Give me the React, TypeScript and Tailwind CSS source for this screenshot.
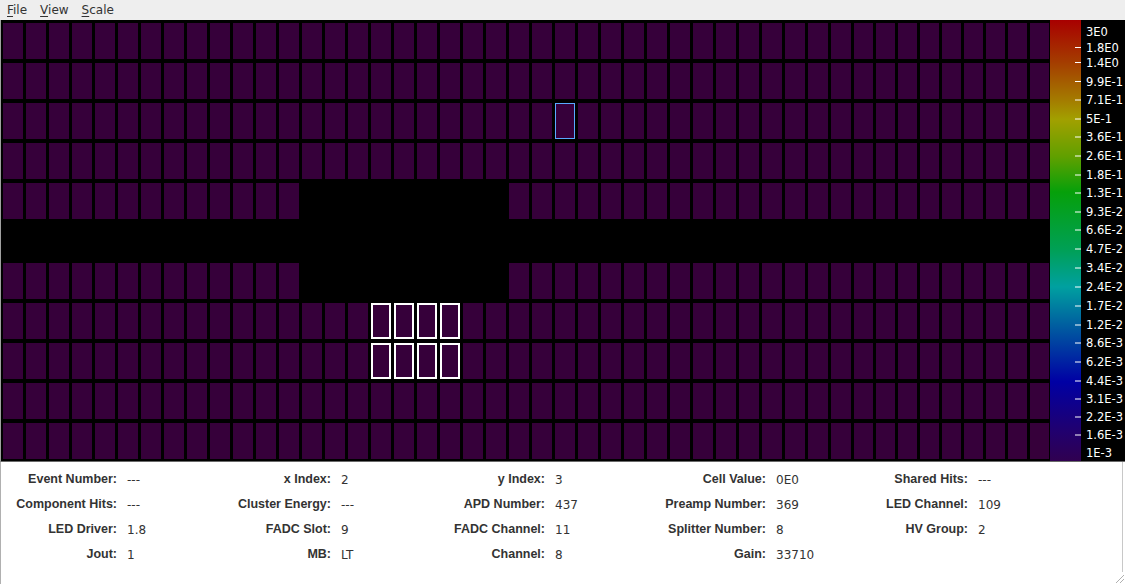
import React from "react";

const COLS = 46;
const ROWS = 11;

const labels: [string, number][] = [
  ["3E0", 32],
  ["1.8E0", 47.5],
  ["1.4E0", 62.5],
  ["9.9E-1", 81.5],
  ["7.1E-1", 100],
  ["5E-1", 119],
  ["3.6E-1", 137],
  ["2.6E-1", 156],
  ["1.8E-1", 175],
  ["1.3E-1", 193],
  ["9.3E-2", 212],
  ["6.6E-2", 230],
  ["4.7E-2", 249],
  ["3.4E-2", 268],
  ["2.4E-2", 287],
  ["1.7E-2", 306],
  ["1.2E-2", 325],
  ["8.6E-3", 343],
  ["6.2E-3", 362],
  ["4.4E-3", 381],
  ["3.1E-3", 399],
  ["2.2E-3", 417],
  ["1.6E-3", 435],
  ["1E-3", 453],
];

function Cell({ r, c }: { r: number; c: number }) {
  const w = c < 37 ? "w-[20px]" : "w-[19px]";
  const hole = r === 5 || ((r === 4 || r === 6) && c >= 13 && c <= 21);
  if (hole) return <div className={`${w} h-[36px] shrink-0 bg-black`} />;
  const blue = r === 2 && c === 24;
  const white = (r === 7 || r === 8) && c >= 16 && c <= 19;
  let cls = "bg-[#36003a]";
  if (blue) cls = "bg-[#36003a] border border-[#5aa8ff]";
  if (white) cls = "bg-[#36003a] border-2 border-white";
  return <div className={`${w} h-[36px] shrink-0 box-border ${cls}`} />;
}

function ColorBar() {
  return (
    <svg width="75" height="441" className="block shrink-0">
      <defs>
        <linearGradient id="cb" x1="0" y1="0" x2="0" y2="1">
          <stop offset="0" stopColor="#a80000" />
          <stop offset="0.095" stopColor="#a43c00" />
          <stop offset="0.18" stopColor="#a47a00" />
          <stop offset="0.225" stopColor="#a2a000" />
          <stop offset="0.31" stopColor="#60a000" />
          <stop offset="0.39" stopColor="#06a00a" />
          <stop offset="0.52" stopColor="#00a055" />
          <stop offset="0.605" stopColor="#00a0a0" />
          <stop offset="0.69" stopColor="#0060a0" />
          <stop offset="0.82" stopColor="#0000a4" />
          <stop offset="0.93" stopColor="#200070" />
          <stop offset="1" stopColor="#300050" />
        </linearGradient>
      </defs>
      <rect x="0" y="0" width="75" height="441" fill="#000" />
      <rect x="0" y="0" width="31" height="441" fill="url(#cb)" />
      {labels.map(([t, y], i) => (
        <g key={t + i}>
          {i > 0 && i < labels.length - 1 && (
            <line x1="25" x2="31" y1={y - 20} y2={y - 20} stroke="#fff" strokeWidth="1" />
          )}
          <text
            x="36"
            y={y - 20 + 4}
            fill="#fff"
            fontSize="11.5"
            fontFamily="'DejaVu Sans', sans-serif"
          >
            {t}
          </text>
        </g>
      ))}
    </svg>
  );
}

const rows: [string, string][][] = [
  [
    ["Event Number:", "---"],
    ["x Index:", "2"],
    ["y Index:", "3"],
    ["Cell Value:", "0E0"],
    ["Shared Hits:", "---"],
  ],
  [
    ["Component Hits:", "---"],
    ["Cluster Energy:", "---"],
    ["APD Number:", "437"],
    ["Preamp Number:", "369"],
    ["LED Channel:", "109"],
  ],
  [
    ["LED Driver:", "1.8"],
    ["FADC Slot:", "9"],
    ["FADC Channel:", "11"],
    ["Splitter Number:", "8"],
    ["HV Group:", "2"],
  ],
  [
    ["Jout:", "1"],
    ["MB:", "LT"],
    ["Channel:", "8"],
    ["Gain:", "33710"],
    ["", ""],
  ],
];

export default function App() {
  return (
    <div className="w-[1125px] h-[584px] bg-[#eeeeee] flex flex-col overflow-hidden text-[#333333] [font-family:'DejaVu_Sans',sans-serif]">
      {/* Menu bar */}
      <div className="h-[20px] flex items-center text-[12px] bg-[#eeeeee] pl-[1px]">
        <div className="px-[6px]"><span className="underline underline-offset-2">F</span>ile</div>
        <div className="px-[7px]"><span className="underline underline-offset-2">V</span>iew</div>
        <div className="px-[6px]"><span className="underline underline-offset-2">S</span>cale</div>
      </div>

      {/* Main */}
      <div className="h-[441px] flex">
        <div className="w-[1050px] h-full bg-black border-l border-[#a0a0a0] pl-[2px] pt-[3px] flex flex-col gap-[4px] shrink-0">
          {Array.from({ length: ROWS }).map((_, r) => (
            <div key={r} className="flex gap-[3px]">
              {Array.from({ length: COLS }).map((_, c) => (
                <Cell key={c} r={r} c={c} />
              ))}
            </div>
          ))}
        </div>
        <ColorBar />
      </div>

      {/* Info panel */}
      <div className="relative flex-1 bg-white border-t border-[#6a6a6a] border-l border-l-[#b0b0b0] pt-[5px]">
        <div className="grid grid-cols-[116px_114px_100px_114px_100px_121px_100px_102px_100px_1fr]">
          {rows.map((row, ri) =>
            row.map(([l, v], ci) => (
              <React.Fragment key={`${ri}-${ci}`}>
                <div className="h-[25px] flex items-center justify-end whitespace-nowrap text-[12.5px] font-bold [font-family:'Liberation_Sans',sans-serif]">
                  {l}
                </div>
                <div className="h-[25px] flex items-center pl-[10px] whitespace-nowrap text-[12px]">
                  {v}
                </div>
              </React.Fragment>
            ))
          )}
        </div>
        <div className="absolute right-[2px] top-0 bottom-[12px] w-px bg-[#c8c8c8]" />
        <svg className="absolute right-0 bottom-0" width="12" height="12">
          <line x1="11" y1="3" x2="3" y2="11" stroke="#b0b0b0" />
          <line x1="11" y1="7" x2="7" y2="11" stroke="#b0b0b0" />
        </svg>
      </div>
    </div>
  );
}
